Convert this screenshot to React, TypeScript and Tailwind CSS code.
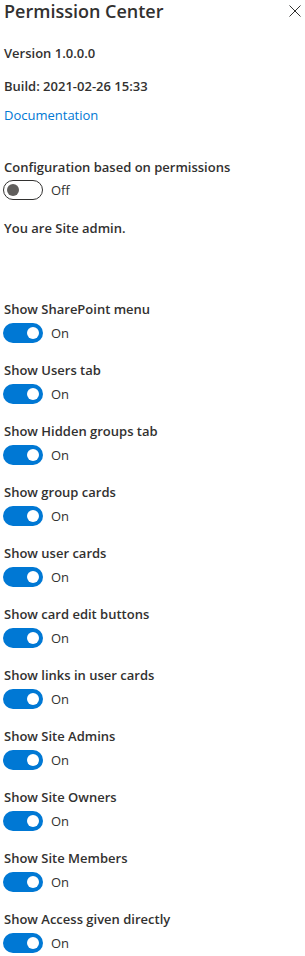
const items = [
  "Show SharePoint menu",
  "Show Users tab",
  "Show Hidden groups tab",
  "Show group cards",
  "Show user cards",
  "Show card edit buttons",
  "Show links in user cards",
  "Show Site Admins",
  "Show Site Owners",
  "Show Site Members",
  "Show Access given directly",
];

function Toggle({ on }: { on: boolean }) {
  return (
    <div className="flex h-5 items-center">
      <div
        className={
          on
            ? "ml-[3px] flex h-5 w-10 items-center justify-end rounded-full bg-[#0078d4] px-[4px]"
            : "ml-[3px] flex h-5 w-10 items-center justify-start rounded-full border border-[#323130] bg-white px-[3px]"
        }
      >
        <span className={on ? "h-3 w-3 rounded-full bg-white" : "h-3 w-3 rounded-full bg-[#605e5c]"} />
      </div>
      <span className="ml-2 text-[13px] leading-5 text-[#323130]">{on ? "On" : "Off"}</span>
    </div>
  );
}

export default function App() {
  return (
    <div className="min-h-[956px] w-[305px] bg-white font-['Open_Sans',sans-serif] text-[#323130]">
      <div className="flex h-[22px] items-center justify-between pl-[4px] pr-[4px]">
        <h1 className="text-[18px] font-semibold leading-[22px]">Permission Center</h1>
        <svg width="12" height="12" viewBox="0 0 12 12">
          <path d="M0.5 0.5 L11.5 11.5 M11.5 0.5 L0.5 11.5" stroke="#323130" strokeWidth="1" fill="none" />
        </svg>
      </div>
      <div className="pl-[4px]">
        <p className="mt-[21px] text-[13px] font-semibold leading-5">Version 1.0.0.0</p>
        <p className="mt-[13px] text-[13px] font-semibold leading-5">Build: 2021-02-26 15:33</p>
        <a className="mt-[9px] block text-[13px] leading-5 text-[#0078d4]">Documentation</a>
        <p className="mt-[32px] text-[13px] font-semibold leading-5">Configuration based on permissions</p>
      </div>
      <div className="mt-[3px]">
        <Toggle on={false} />
      </div>
      <p className="mt-[18px] pl-[4px] text-[13px] font-semibold leading-5">You are Site admin.</p>
      <div className="mt-[61px] flex flex-col gap-[17px]">
        {items.map((label) => (
          <div key={label} className="flex flex-col gap-[4px]">
            <p className="pl-[4px] text-[13px] font-semibold leading-5">{label}</p>
            <Toggle on={true} />
          </div>
        ))}
      </div>
    </div>
  );
}
